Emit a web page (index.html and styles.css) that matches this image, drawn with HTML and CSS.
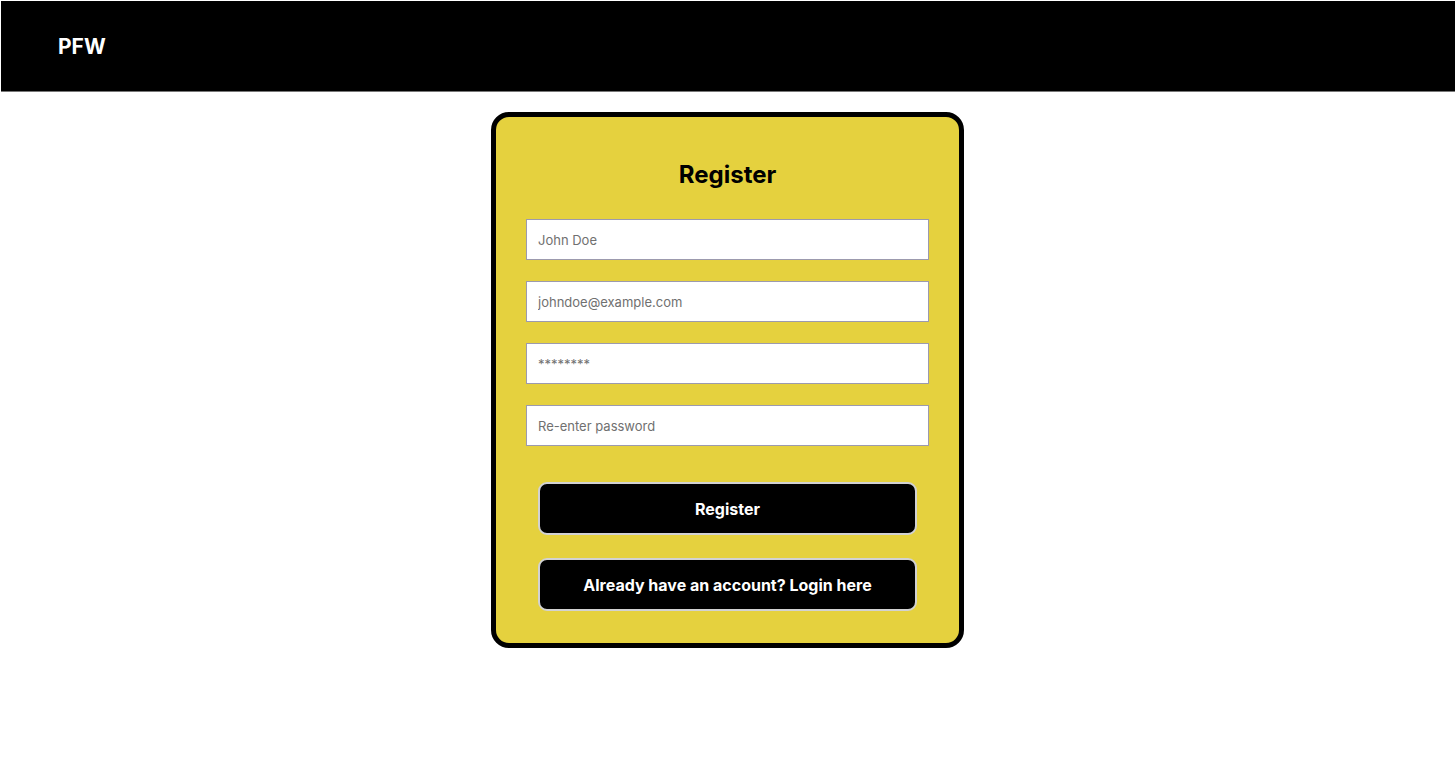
FILE: index.html
```html
<!DOCTYPE html>
<html lang="en">
<head>
  <meta charset="UTF-8">
  <meta name="viewport" content="width=device-width, initial-scale=1.0">
  <title>PFW - Register</title>
  <link rel="stylesheet" href="styles.css">
</head>
<body>
  <header class="topbar">
    <div class="brand">PFW</div>
  </header>

  <main class="page">
    <form class="card" onsubmit="return false;">
      <h2>Register</h2>
      <input type="text" placeholder="John Doe">
      <input type="email" placeholder="johndoe@example.com">
      <input type="password" placeholder="********">
      <input type="password" placeholder="Re-enter password">
      <div class="actions">
        <button type="submit" class="btn">Register</button>
        <button type="button" class="btn">Already have an account? Login here</button>
      </div>
    </form>
  </main>
</body>
</html>
```

FILE: styles.css
```css
body {
  font-family: Inter, "Liberation Sans", Arial, sans-serif;
  margin: 0;
  background: #fff;
}
.topbar {
  height: 90px;
  margin: 1px 1px 0;
  background: #000;
  border-bottom: 1px solid #777;
  display: flex;
  align-items: center;
  padding-left: 57px;
}
.brand {
  color: #fff;
  font-weight: 700;
  font-size: 21px;
}
.page {
  display: flex;
  justify-content: center;
  padding: 20px 1px 0 0;
}
.card {
  width: 473px;
  box-sizing: border-box;
  background: #e5d13e;
  border: 5px solid #000;
  border-radius: 18px;
  padding: 43px 30px 32px 30px;
  display: flex;
  flex-direction: column;
}
.card h2 {
  margin: 0 0 29px;
  text-align: center;
  font-size: 24px;
  font-weight: 700;
  color: #000;
  line-height: 30px;
}
.card input {
  height: 41px;
  box-sizing: border-box;
  border: 1px solid #9c9aae;
  background: #fff;
  padding: 0 11px;
  font-family: inherit;
  font-size: 13px;
  margin-bottom: 21px;
  outline: none;
}
.card input::placeholder {
  color: #707070;
}
.actions {
  display: flex;
  flex-direction: column;
  gap: 23px;
  padding: 15px 12px 0;
}
.btn {
  height: 53px;
  background: #000;
  color: #fff;
  border: 2px solid #d2d2d2;
  border-radius: 9px;
  font-family: inherit;
  font-size: 16px;
  font-weight: 700;
  cursor: pointer;
}
```
